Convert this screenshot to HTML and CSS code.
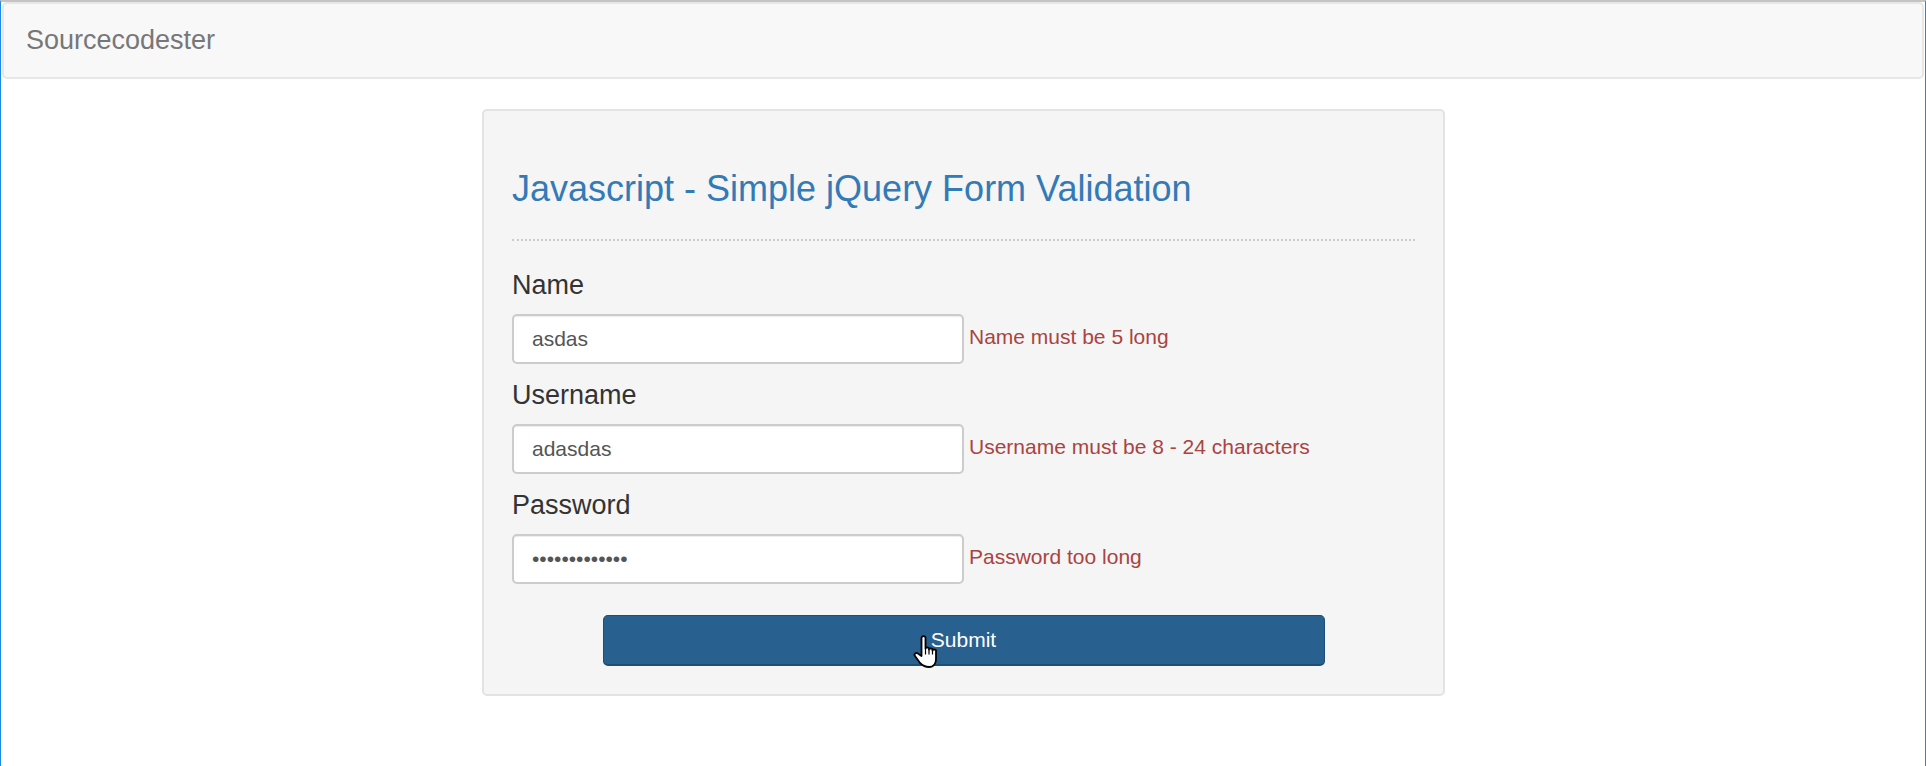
FILE: index.html
```html
<!DOCTYPE html>
<html lang="en">
<head>
<meta charset="utf-8">
<title>Javascript - Simple jQuery Form Validation</title>
<link rel="stylesheet" href="styles.css">
</head>
<body>
<div class="window">
  <nav class="navbar"><a class="brand">Sourcecodester</a></nav>
  <main class="page">
    <form class="well">
      <h3 class="title">Javascript - Simple jQuery Form Validation</h3>
      <hr class="rule">
      <div class="group">
        <label class="label">Name</label>
        <div class="row"><input class="control" type="text" value="asdas"><span class="error">Name must be 5 long</span></div>
      </div>
      <div class="group">
        <label class="label">Username</label>
        <div class="row"><input class="control" type="text" value="adasdas"><span class="error">Username must be 8 - 24 characters</span></div>
      </div>
      <div class="group">
        <label class="label">Password</label>
        <div class="row"><input class="control" type="password" value="1234567890123"><span class="error">Password too long</span></div>
      </div>
      <div class="actions">
        <button class="submit" type="button">Submit
          <svg class="cursor" width="27" height="33" viewBox="0 0 27 33"><path d="M8.500 3c0-2.500 4-2.500 4 0v10.500c0-1.500 3.500-1.500 3.500 0v1c0-1.500 3.500-1.500 3.500 0v1c0-1.500 3.500-1.500 3.500 0V24c0 4-2 8-7 8-5 0-7-2-9-4L2 21c-1.500-2 1-4 3-2.500L8.500 21z" fill="#fff" stroke="#000" stroke-width="1.800" stroke-linejoin="round"/><path d="M12.500 13.500v6M16 14.500v5M19.500 15.500v4" fill="none" stroke="#000" stroke-width="1.200"/></svg>
        </button>
      </div>
    </form>
  </main>
</div>
</body>
</html>
```
FILE: styles.css
```css
* { box-sizing: border-box; }
html, body { margin: 0; height: 100%; }
body { font-family: "Liberation Sans", Arial, sans-serif; font-size: 21px; color: #333; background: #fff; }
.window { height: 766px; border-left: 1px solid #1e88e5; border-right: 1px solid #1e88e5; border-top: 2px solid #c4c4c4; overflow: hidden; }
.navbar { height: 77px; margin: 0 1px; padding: 0 22px; display: flex; align-items: center; background: #f8f8f8; border: 2px solid #e7e7e7; border-radius: 5px; }
.brand { font-size: 27px; color: #777; }
.page { display: flex; justify-content: center; padding-top: 30px; }
.well { width: 963px; height: 587px; padding: 30px 27.5px 30px 28.5px; background: #f5f5f5; border: 2px solid #e3e3e3; border-radius: 5px; }
.title { margin: 28px 0 0; font-size: 36px; font-weight: 500; line-height: 1.1; color: #337ab7; }
.rule { margin: 30px 0 0; border: 0; border-top: 2px dotted #ccc; }
.group { margin: 0; }
.group:first-of-type { margin-top: 13.5px; }
.label { display: flex; align-items: center; height: 60px; padding-top: 2px; font-size: 27px; font-weight: 400; color: #333; }
.row { display: flex; align-items: center; }
.control { width: 452px; height: 50px; padding: 0 18px; font: 21px "Liberation Sans", Arial, sans-serif; color: #555; background: #fff; border: 2px solid #ccc; border-radius: 5px; box-shadow: inset 0 1px 1px rgba(0,0,0,.075); outline: 0; }
.error { margin: 0 0 4px 5px; font-size: 21px; color: #a94442; }
.actions { display: flex; justify-content: center; margin-top: 31px; }
.submit { position: relative; width: 722px; height: 51px; padding: 0 0 1px; font: 21px "Liberation Sans", Arial, sans-serif; color: #fff; background: #286090; border: 1px solid #204d74; border-bottom-width: 2px; border-radius: 5px; }
.cursor { position: absolute; left: 309px; top: 19px; }
```
